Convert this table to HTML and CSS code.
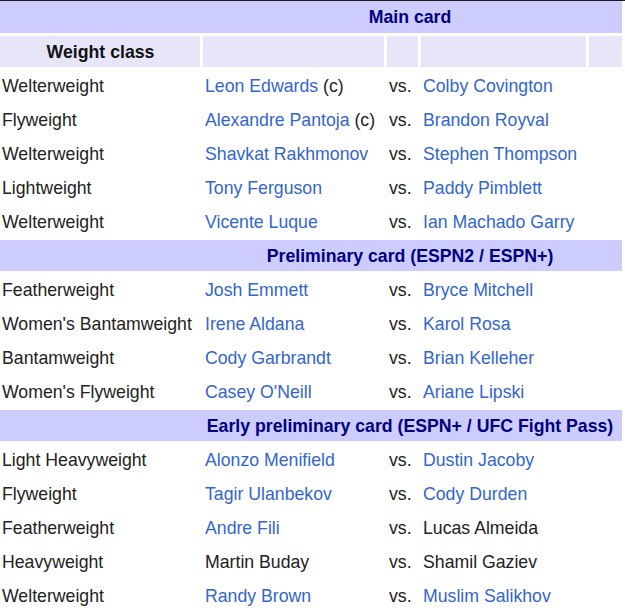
FILE: index.html
```html
<!DOCTYPE html>
<html>
<head>
<meta charset="utf-8">
<link rel="stylesheet" href="styles.css">
</head>
<body>
<table class="card">
  <colgroup>
    <col class="c-weight"><col class="c-fighter"><col class="c-vs"><col class="c-opp"><col class="c-extra">
  </colgroup>
  <tr><th colspan="5" class="section top">Main card</th></tr>
  <tr class="colhead"><th>Weight class</th><th></th><th></th><th></th><th></th></tr>
  <tr><td>Welterweight</td><td><a>Leon Edwards</a> (c)</td><td>vs.</td><td><a>Colby Covington</a></td><td></td></tr>
  <tr><td>Flyweight</td><td><a>Alexandre Pantoja</a> (c)</td><td>vs.</td><td><a>Brandon Royval</a></td><td></td></tr>
  <tr><td>Welterweight</td><td><a>Shavkat Rakhmonov</a></td><td>vs.</td><td><a>Stephen Thompson</a></td><td></td></tr>
  <tr><td>Lightweight</td><td><a>Tony Ferguson</a></td><td>vs.</td><td><a>Paddy Pimblett</a></td><td></td></tr>
  <tr><td>Welterweight</td><td><a>Vicente Luque</a></td><td>vs.</td><td><a>Ian Machado Garry</a></td><td></td></tr>
  <tr><th colspan="5" class="section">Preliminary card (ESPN2 / ESPN+)</th></tr>
  <tr><td>Featherweight</td><td><a>Josh Emmett</a></td><td>vs.</td><td><a>Bryce Mitchell</a></td><td></td></tr>
  <tr><td>Women's Bantamweight</td><td><a>Irene Aldana</a></td><td>vs.</td><td><a>Karol Rosa</a></td><td></td></tr>
  <tr><td>Bantamweight</td><td><a>Cody Garbrandt</a></td><td>vs.</td><td><a>Brian Kelleher</a></td><td></td></tr>
  <tr><td>Women's Flyweight</td><td><a>Casey O'Neill</a></td><td>vs.</td><td><a>Ariane Lipski</a></td><td></td></tr>
  <tr><th colspan="5" class="section">Early preliminary card (ESPN+ / UFC Fight Pass)</th></tr>
  <tr><td>Light Heavyweight</td><td><a>Alonzo Menifield</a></td><td>vs.</td><td><a>Dustin Jacoby</a></td><td></td></tr>
  <tr><td>Flyweight</td><td><a>Tagir Ulanbekov</a></td><td>vs.</td><td><a>Cody Durden</a></td><td></td></tr>
  <tr><td>Featherweight</td><td><a>Andre Fili</a></td><td>vs.</td><td>Lucas Almeida</td><td></td></tr>
  <tr><td>Heavyweight</td><td>Martin Buday</td><td>vs.</td><td>Shamil Gaziev</td><td></td></tr>
  <tr><td>Welterweight</td><td><a>Randy Brown</a></td><td>vs.</td><td><a>Muslim Salikhov</a></td><td></td></tr>
</table>
</body>
</html>
```
FILE: styles.css
```css
html, body {
  margin: 0;
  padding: 0;
  background: #fff;
}
body {
  border-top: 1px solid #1a1a1a;
  overflow: hidden;
}
.card {
  font-family: "Liberation Sans", Arial, sans-serif;
  font-size: 17.7px;
  color: #222;
  border-collapse: separate;
  border-spacing: 3px;
  table-layout: fixed;
  width: 628px;
  margin: -3px 0 0 -3px;
}
.c-weight { width: 200px; }
.c-fighter { width: 181px; }
.c-vs { width: 31px; }
.c-opp { width: 165px; }
.c-extra { width: 33px; }
.card td, .card th {
  height: 31px;
  padding: 0 1px 0 2px;
  box-sizing: border-box;
  white-space: nowrap;
  overflow: hidden;
  line-height: 20px;
}
.card td { text-align: left; }
.card a {
  color: #3366cc;
  text-decoration: none;
}
.section {
  background: #ccccff;
  color: #000080;
  font-weight: bold;
  text-align: center;
  padding: 0 0 0 198px !important;
}
.card .top {
  height: 32px;
  padding-bottom: 1px !important;
}
.colhead th {
  background: #e6e6f8;
  color: #111;
  font-weight: bold;
  text-align: center;
}
```
